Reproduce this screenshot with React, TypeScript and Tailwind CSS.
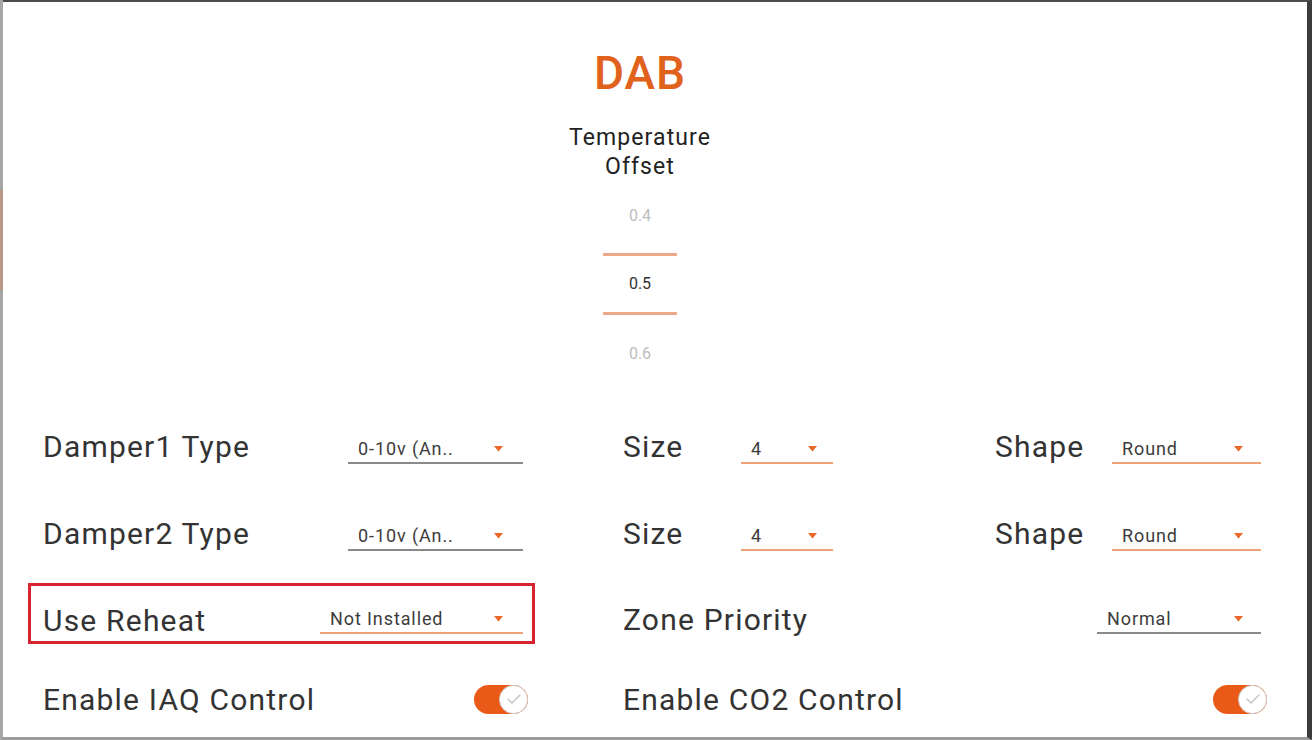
import React from "react";

const font = { fontFamily: "Roboto, 'Noto Sans', sans-serif" };

function Arrow() {
  return (
    <svg width="9" height="6" viewBox="0 0 9 6" className="shrink-0">
      <polygon points="0,0 9,0 4.5,5.5" fill="#e8682a" />
    </svg>
  );
}

function Dropdown({
  value,
  width,
  orange,
  arrowPad = 20,
}: {
  value: string;
  width: string;
  orange?: boolean;
  arrowPad?: number;
}) {
  return (
    <div
      className={`${width} h-[28px] mt-[6px] flex items-center justify-between pl-[10px] border-b-2 ${
        orange ? "border-[#eea077]" : "border-[#8a8a8a]"
      }`}
      style={{ paddingRight: arrowPad }}
    >
      <span className="text-[18px] tracking-[0.9px] text-[#3c3c3c] leading-none">
        {value}
      </span>
      <Arrow />
    </div>
  );
}

function Toggle() {
  return (
    <div className="w-[54px] h-[29px] rounded-full bg-[#e95a18] flex items-center justify-end">
      <div className="w-[29px] h-[29px] rounded-full bg-white border border-[#d0d0d0] flex items-center justify-center">
        <svg width="16" height="12" viewBox="0 0 16 12">
          <polyline
            points="2,6 6,10 14,2"
            fill="none"
            stroke="#c4c4c4"
            strokeWidth="1.4"
            strokeLinecap="round"
            strokeLinejoin="round"
          />
        </svg>
      </div>
    </div>
  );
}

export default function App() {
  return (
    <div
      className="w-[1312px] h-[740px] bg-white flex flex-row overflow-hidden"
      style={font}
    >
      <div className="w-[3px] h-full flex flex-col">
        <div className="h-[190px] bg-[#a6a6a6]" />
        <div className="h-[100px] bg-[#b89886]" />
        <div className="flex-1 bg-[#a6a6a6]" />
      </div>
      <div className="flex-1 flex flex-col border-t-2 border-t-[#4c4c4c] border-b-[3px] border-b-[#9c9c9c] border-r-[5px] border-r-[#3c3c3c]">
        {/* header */}
        <div className="flex flex-col items-center pr-[30px]">
          <div className="mt-[48px] h-[46px] text-[46px] leading-none font-medium tracking-[1px] text-[#e0621c]">
            DAB
          </div>
          <div className="mt-[27px] text-[23px] leading-[29px] tracking-[1.1px] text-[#222] text-center">
            Temperature
            <br />
            Offset
          </div>
          <div className="h-[70px] w-[74px] flex items-center justify-center text-[16px] text-[#bdbdbd]">
            0.4
          </div>
          <div className="mt-[2px] h-[3px] w-[74px] bg-[#eaa98a]" />
          <div className="h-[56px] w-[74px] flex items-center justify-center text-[16px] text-[#333]">
            0.5
          </div>
          <div className="h-[3px] w-[74px] bg-[#eaa98a]" />
          <div className="h-[78px] w-[74px] flex items-center justify-center text-[16px] text-[#bdbdbd]">
            0.6
          </div>
        </div>

        {/* rows */}
        <div className="mt-[10px] flex flex-col text-[30px] tracking-[1.2px] text-[#333]">
          {["Damper1 Type", "Damper2 Type"].map((label) => (
            <div key={label} className="h-[87px] flex items-center pl-[40px]">
              <div className="w-[305px]">{label}</div>
              <Dropdown value="0-10v (An.." width="w-[175px]" />
              <div className="w-[100px]" />
              <div className="w-[118px]">Size</div>
              <Dropdown value="4" width="w-[92px]" orange arrowPad={16} />
              <div className="w-[162px]" />
              <div className="w-[117px]">Shape</div>
              <Dropdown value="Round" width="w-[149px]" orange arrowPad={18} />
            </div>
          ))}

          <div className="h-[87px] flex items-start">
            <div className="ml-[25px] mt-[6px] w-[507px] h-[61px] border-[3px] border-[#d82330] flex items-center pl-[12px] pt-[6px]">
              <div className="w-[277px] mt-[8px]">Use Reheat</div>
              <Dropdown value="Not Installed" width="w-[203px]" orange />
            </div>
            <div className="flex-1 flex items-center mt-[14px] pl-[88px] pr-[46px]">
              <div className="flex-1 mt-[6px]">Zone Priority</div>
              <Dropdown value="Normal" width="w-[164px]" arrowPad={18} />
            </div>
          </div>

          <div className="h-[70px] flex items-center pl-[40px]">
            <div className="w-[431px]">Enable IAQ Control</div>
            <Toggle />
            <div className="w-[95px]" />
            <div className="flex-1">Enable CO2 Control</div>
            <div className="mr-[40px]">
              <Toggle />
            </div>
          </div>
        </div>
      </div>
    </div>
  );
}
